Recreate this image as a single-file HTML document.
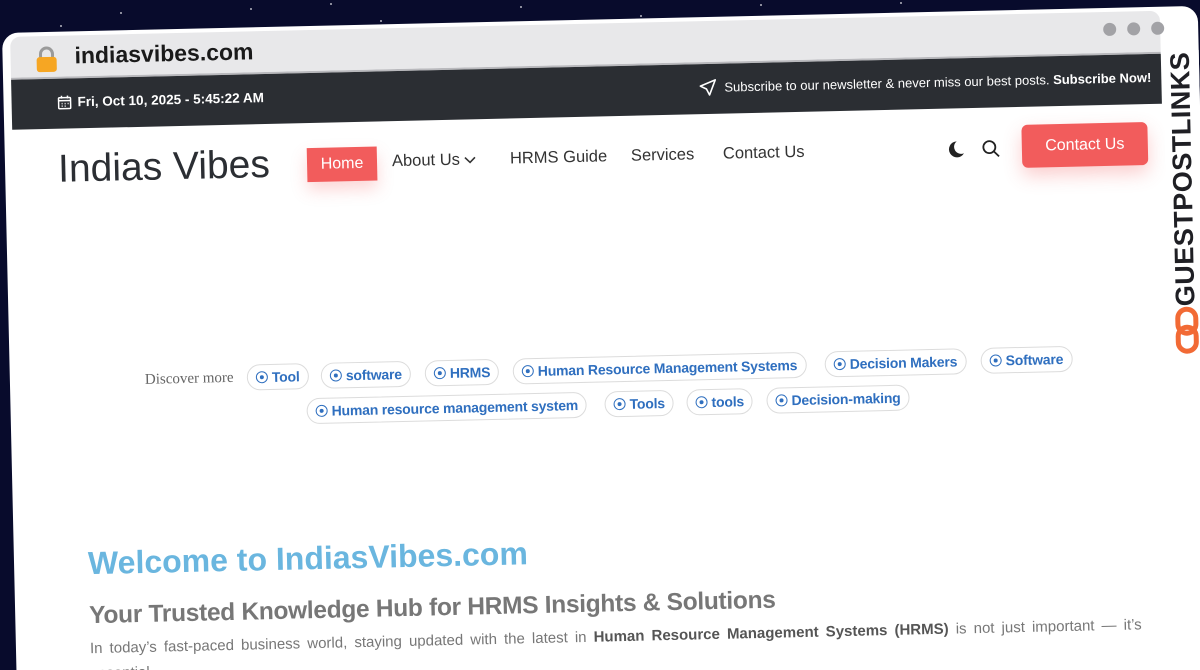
<!DOCTYPE html>
<html><head><meta charset="utf-8">
<style>
*{margin:0;padding:0;box-sizing:border-box}
html,body{width:1200px;height:670px;overflow:hidden;background:#080b2c;font-family:"Liberation Sans",sans-serif}
#clip{position:absolute;left:0;top:0;width:1200px;height:670px;overflow:hidden}
.star{position:absolute;width:2px;height:2px;background:#fff;border-radius:50%;opacity:.7}
#win{position:absolute;left:2px;top:33px;width:1196px;height:680px;background:#fff;border-radius:16px;transform-origin:0 0;transform:rotate(-1.3deg);overflow:hidden}
#bar{position:absolute;left:8px;top:4px;width:1150px;height:43px;background:#e8e8ea;border-bottom:2px solid #b9b9bd;border-radius:10px 10px 0 0}
.dot{position:absolute;top:11px;width:13px;height:13px;border-radius:50%;background:#a2a2a6}
#top{position:absolute;left:8px;top:47px;width:1150px;height:50px;background:#2b2e33;color:#fff;font-size:13px}
.abs{position:absolute;white-space:nowrap}
.nav{position:absolute;top:128px;font-size:16.5px;color:#333}
.tag{position:absolute;height:26px;border:1px solid #dcdcdc;border-radius:14px;background:#fff;color:#2f6fbf;font-size:14px;font-weight:bold;line-height:24px;padding:0 8px;white-space:nowrap;letter-spacing:-.2px}
.tag b{display:inline-block;width:12px;height:12px;border:1.6px solid #2f6fbf;border-radius:50%;margin-right:4px;vertical-align:-1px;position:relative}
.tag b:after{content:"";position:absolute;left:2.5px;top:2.5px;width:4px;height:4px;background:#2f6fbf;border-radius:50%}
</style></head><body>
<div id="clip">
<div class="star" style="left:120px;top:12px"></div><div class="star" style="left:250px;top:8px"></div><div class="star" style="left:380px;top:20px"></div><div class="star" style="left:520px;top:6px"></div><div class="star" style="left:640px;top:15px"></div><div class="star" style="left:760px;top:4px"></div><div class="star" style="left:60px;top:25px"></div><div class="star" style="left:900px;top:2px"></div><div class="star" style="left:330px;top:3px"></div>
<div id="win">
 <div id="bar">
  <svg style="position:absolute;left:25px;top:10px" width="22" height="27" viewBox="0 0 22 27"><path d="M5 12V8a6 6 0 0 1 12 0v4" fill="none" stroke="#9a9a9a" stroke-width="3"/><rect x="1" y="11" width="20" height="15" rx="3" fill="#f6a623"/></svg>
  <div class="abs" style="left:64px;top:7px;font-size:23px;font-weight:bold;color:#1a1a1a">indiasvibes.com</div>
  <div class="dot" style="left:1093px"></div><div class="dot" style="left:1117px"></div><div class="dot" style="left:1141px"></div>
 </div>
 <div id="top">
  <svg class="abs" style="left:46px;top:17px" width="14" height="14" viewBox="0 0 14 14" fill="none" stroke="#fff" stroke-width="1.5"><rect x="1" y="2" width="12" height="11" rx="1"/><path d="M1 5h12M4 0v3M10 0v3M4 8h1M7 8h1M10 8h1M4 10.5h1M7 10.5h1"/></svg>
  <div class="abs" style="left:66px;top:16px;font-size:13.5px;font-weight:bold">Fri, Oct 10, 2025 - 5:45:22 AM</div>
  <svg class="abs" style="left:688px;top:15px" width="17" height="17" viewBox="0 0 17 17" fill="none" stroke="#fff" stroke-width="1.6" stroke-linejoin="round"><path d="M16 1L1 7l6 3 3 6z"/></svg>
  <div class="abs" style="left:713px;top:16px;font-size:13px">Subscribe to our newsletter &amp; never miss our best posts. <b>Subscribe Now!</b></div>
 </div>
 <div class="abs" style="left:53px;top:116px;font-size:39px;color:#2b2e33">Indias Vibes</div>
 <div class="abs" style="left:302px;top:122px;width:70px;height:34px;background:#f25c5c;color:#fff;font-size:16px;line-height:34px;text-align:center;box-shadow:0 8px 16px rgba(242,92,92,.25)">Home</div>
 <div class="nav" style="left:387px">About Us <svg width="12" height="8" viewBox="0 0 12 8" fill="none" stroke="#333" stroke-width="1.6"><path d="M1 1l5 5 5-5"/></svg></div>
 <div class="nav" style="left:505px">HRMS Guide</div>
 <div class="nav" style="left:626px">Services</div>
 <div class="nav" style="left:718px">Contact Us</div>
 <svg class="abs" style="left:943px;top:129px" width="17" height="18" viewBox="0 0 17 18"><path d="M9 1a8 8 0 1 0 7 12A7 7 0 0 1 9 1z" fill="#222"/></svg>
 <svg class="abs" style="left:977px;top:129px" width="18" height="18" viewBox="0 0 18 18" fill="none" stroke="#222" stroke-width="1.8"><circle cx="7.5" cy="7.5" r="6"/><path d="M12 12l5 5"/></svg>
 <div class="abs" style="left:1017px;top:115px;width:126px;height:43px;background:#f25c5c;border-radius:6px;color:#fff;font-size:16px;line-height:43px;text-align:center;box-shadow:0 8px 18px rgba(242,92,92,.3)">Contact Us</div>
 <div class="abs" style="left:1160px;top:44px;width:40px;height:700px;background:#fff"></div>
 <div class="abs" style="left:1160px;top:300px;transform-origin:0 0;transform:rotate(-90deg);font-size:27px;font-weight:bold;color:#1f1f24;letter-spacing:.5px;line-height:34px">GUESTPOSTLINKS</div>
 <svg class="abs" style="left:1166px;top:300px" width="24" height="48" viewBox="0 0 24 48" fill="none" stroke="#f26a35" stroke-width="5"><rect x="3" y="3" width="18" height="24" rx="9"/><rect x="3" y="21" width="18" height="24" rx="9"/></svg>
 <div class="abs" style="left:135px;top:342px;font-family:'Liberation Serif',serif;font-size:15px;color:#666">Discover more</div>
 <div class="tag" style="left:237px;top:337px"><b></b>Tool</div>
 <div class="tag" style="left:311px;top:337px"><b></b>software</div>
 <div class="tag" style="left:415px;top:337px"><b></b>HRMS</div>
 <div class="tag" style="left:503px;top:337px"><b></b>Human Resource Management Systems</div>
 <div class="tag" style="left:815px;top:337px"><b></b>Decision Makers</div>
 <div class="tag" style="left:971px;top:337px"><b></b>Software</div>
 <div class="tag" style="left:296px;top:372px"><b></b>Human resource management system</div>
 <div class="tag" style="left:594px;top:372px"><b></b>Tools</div>
 <div class="tag" style="left:676px;top:372px"><b></b>tools</div>
 <div class="tag" style="left:756px;top:372px"><b></b>Decision-making</div>
 <div class="abs" style="left:74px;top:514px;font-size:32px;font-weight:bold;color:#6ab6df">Welcome to IndiasVibes.com</div>
 <div class="abs" style="left:74px;top:571px;font-size:24.5px;font-weight:bold;color:#777;letter-spacing:-.3px">Your Trusted Knowledge Hub for HRMS Insights &amp; Solutions</div>
 <div class="abs" style="left:74px;top:605px;width:1052px;font-size:15px;color:#777;line-height:25px;white-space:normal;text-align:justify">In today’s fast-paced business world, staying updated with the latest in <b style="color:#555">Human Resource Management Systems (HRMS)</b> is not just important — it’s essential.</div>
 <div class="abs" style="left:74px;top:662px;width:1052px;font-size:15px;color:#777;text-align:right">Whether you are an HR professional, a business owner, or a tech enthusiast looking to make</div>
</div>
</div>
</body></html>
